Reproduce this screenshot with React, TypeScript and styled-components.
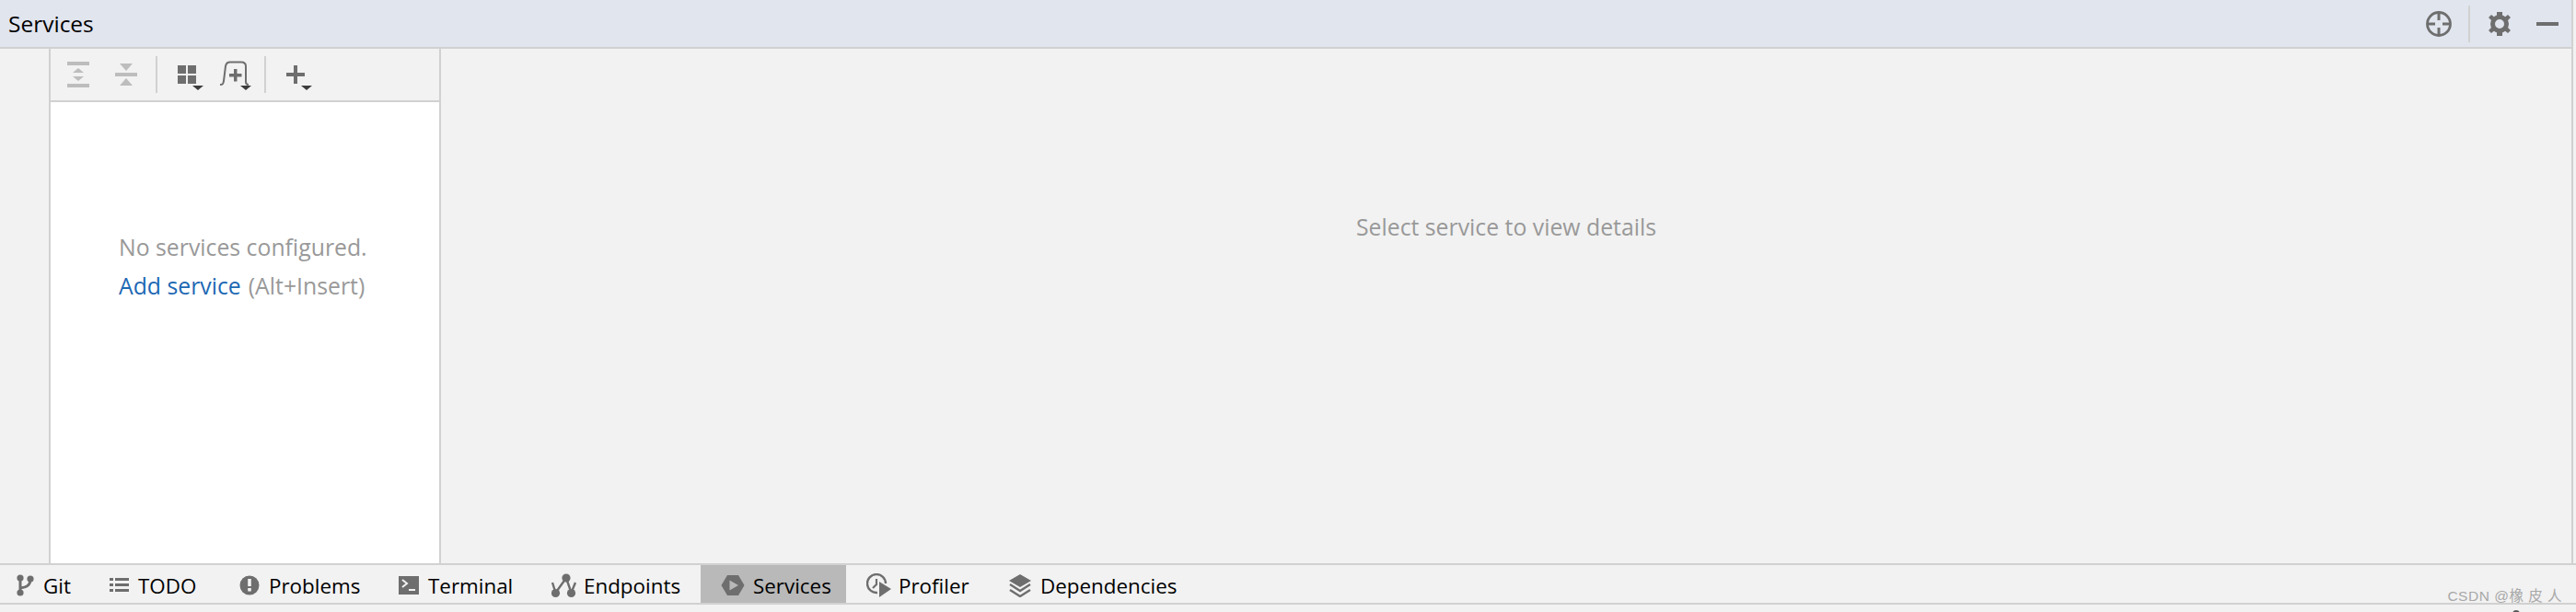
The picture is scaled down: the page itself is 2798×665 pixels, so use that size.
import React from "react";
import styled, { createGlobalStyle } from "styled-components";

const GlobalStyle = createGlobalStyle`
  html, body {
    margin: 0;
    padding: 0;
    background: #f2f2f2;
  }
  body {
    font-family: "Open Sans", "Noto Sans", "Liberation Sans", sans-serif;
  }
`;

const ICON = "#6e6e6e";
const MUTED = "#bdbdbd";
const ARROW = "#3c3c3c";

const IconExpand = () => (
  <svg width="24" height="36" viewBox="0 0 24 36">
    <rect y="4" width="24" height="4" fill={MUTED} />
    <rect y="28" width="24" height="4" fill={MUTED} />
    <path d="M12 11l6 5H6zM12 25l6-5H6z" fill={MUTED} />
  </svg>
);

const IconCollapse = () => (
  <svg width="24" height="36" viewBox="0 0 24 36">
    <rect y="16" width="24" height="4" fill={MUTED} />
    <path d="M5 6h14l-7 8zM5 30h14l-7-8z" fill={MUTED} />
  </svg>
);

const IconGroup = () => (
  <svg width="28" height="36" viewBox="0 0 28 36">
    <path d="M0 8h9v9H0zM11 8h9v9H11zM0 19h9v9H0zM11 19h9v9H11z" fill={ICON} />
    <path d="M16 30h12l-6 5z" fill={ARROW} />
  </svg>
);

const IconNewService = () => (
  <svg width="34" height="36" viewBox="0 0 34 36">
    <path
      d="M0 29c3 0 3.500-1 4-4L6 9c.5-3 2-4.500 5-4.500h12c3 0 5 1.500 5 4.500v17c0 2 1 3 3 3"
      fill="none"
      stroke={ICON}
      strokeWidth="2"
    />
    <path d="M15 12h3.500v5h5v3.500h-5v5H15v-5h-5V17h5z" fill={ICON} />
    <path d="M22 30h12l-6 5z" fill={ARROW} />
  </svg>
);

const IconAdd = () => (
  <svg width="28" height="36" viewBox="0 0 28 36">
    <path d="M8 8h4v8h8v4h-8v8H8v-8H0v-4h8z" fill={ICON} />
    <path d="M16 30h12l-6 5z" fill={ARROW} />
  </svg>
);

const IconTarget = () => (
  <svg width="28" height="28" viewBox="0 0 28 28">
    <circle cx="14" cy="14" r="12.500" fill="none" stroke={ICON} strokeWidth="2.800" />
    <path d="M14 2v8M14 18v8M2 14h8M18 14h8" stroke={ICON} strokeWidth="3" />
  </svg>
);

const IconGear = () => (
  <svg width="24" height="26" viewBox="0 0 24 26">
    <circle cx="12" cy="13" r="7.500" fill="none" stroke={ICON} strokeWidth="5" />
    <path
      d="M9 0h6v5H9zM9 21h6v5H9zM0 6l3-3 5 4-3 4zM24 6l-3-3-5 4 3 4zM0 20l3 3 5-4-3-4zM24 20l-3 3-5-4 3-4z"
      fill={ICON}
    />
  </svg>
);

const IconMinus = () => (
  <svg width="24" height="4" viewBox="0 0 24 4">
    <rect width="24" height="4" fill={ICON} />
  </svg>
);

const IconGit = () => (
  <svg width="20" height="24" viewBox="0 0 20 24">
    <circle cx="5" cy="4" r="3.600" fill={ICON} />
    <circle cx="5" cy="20" r="3.600" fill={ICON} />
    <circle cx="16" cy="5" r="3.600" fill={ICON} />
    <path d="M5 4v16M5 15c6-1 11-2 11-10" fill="none" stroke={ICON} strokeWidth="3" />
  </svg>
);

const IconTodo = () => (
  <svg width="21" height="18" viewBox="0 0 21 18">
    <path
      d="M0 1h4v3H0zM6 1h15v3H6zM0 7h4v3H0zM6 7h15v3H6zM0 13h4v3H0zM6 13h15v3H6z"
      fill={ICON}
    />
  </svg>
);

const IconProblems = () => (
  <svg width="22" height="22" viewBox="0 0 22 22">
    <circle cx="11" cy="11" r="10.500" fill={ICON} />
    <path d="M9.200 4h3.600v8H9.200zM9.200 14h3.600v3.600H9.200z" fill="#f2f2f2" />
  </svg>
);

const IconTerminal = () => (
  <svg width="22" height="20" viewBox="0 0 22 20">
    <rect width="22" height="20" fill={ICON} />
    <path d="M4 4l5 4-5 4" fill="none" stroke="#f2f2f2" strokeWidth="2" />
    <path d="M11 14h7v2h-7z" fill="#f2f2f2" />
  </svg>
);

const IconEndpoints = () => (
  <svg width="27" height="27" viewBox="0 0 27 27">
    <circle cx="16" cy="5" r="4.600" fill={ICON} />
    <circle cx="4.500" cy="21.500" r="4.600" fill={ICON} />
    <circle cx="21.500" cy="21.500" r="4.600" fill={ICON} />
    <path
      d="M1 10l3.500 11L16 5l5.500 16L26 10"
      fill="none"
      stroke={ICON}
      strokeWidth="2.400"
    />
  </svg>
);

const IconServices = () => (
  <svg width="26" height="24" viewBox="0 0 26 24">
    <path d="M7 1h12l6.500 11L19 23H7L.5 12z" fill={ICON} />
    <path d="M9.500 6.500L19 12l-9.500 5.500z" fill="#b9b9b9" />
  </svg>
);

const IconProfiler = () => (
  <svg width="28" height="26" viewBox="0 0 28 26">
    <path d="M12 21A10 10 0 1 1 21 11" fill="none" stroke={ICON} strokeWidth="2.400" />
    <path d="M11 6v6l-4 4" fill="none" stroke={ICON} strokeWidth="2.200" />
    <path d="M14 9l13 8-13 9z" fill={ICON} />
  </svg>
);

const IconDependencies = () => (
  <svg width="24" height="25" viewBox="0 0 24 25">
    <path d="M12 0l12 7-12 7L0 7z" fill={ICON} />
    <path d="M1 11l11 7 11-7M1 17l11 7 11-7" fill="none" stroke={ICON} strokeWidth="2.400" />
  </svg>
);

const tabs = [
  { label: "Git", icon: <IconGit />, width: 97, iconBox: 30, left: 17 },
  { label: "TODO", icon: <IconTodo />, width: 141, iconBox: 31, left: 22 },
  { label: "Problems", icon: <IconProblems />, width: 173, iconBox: 32, left: 22 },
  { label: "Terminal", icon: <IconTerminal />, width: 166, iconBox: 32, left: 22 },
  { label: "Endpoints", icon: <IconEndpoints />, width: 184, iconBox: 35, left: 22 },
  { label: "Services", icon: <IconServices />, width: 158, iconBox: 35, left: 22, active: true },
  { label: "Profiler", icon: <IconProfiler />, width: 155, iconBox: 35, left: 22 },
  { label: "Dependencies", icon: <IconDependencies />, width: 204, iconBox: 34, left: 22 },
];

const Page = styled.div`
  position: relative;
  width: 2798px;
  height: 665px;
  overflow: hidden;
  display: flex;
  flex-direction: column;
  background: #f2f2f2;
`;

const Frame = styled.div`
  width: 2795px;
  height: 612px;
  flex: none;
  box-sizing: border-box;
  border-right: 2px solid #d1d1d1;
  display: flex;
  flex-direction: column;
`;

const TitleBar = styled.header`
  height: 53px;
  flex: none;
  box-sizing: border-box;
  border-bottom: 2px solid #d1d1d1;
  background: #e1e5ee;
  display: flex;
  align-items: center;
  padding: 0 14px 0 9px;
`;

const Title = styled.h1`
  margin: 0;
  font-size: 24.500px;
  font-weight: 400;
  color: #000;
`;

const TitleActions = styled.div`
  margin-left: auto;
  display: flex;
  align-items: center;
`;

const TitleSeparator = styled.span`
  width: 2px;
  height: 40px;
  background: #d1d1d1;
  margin: 0 20px 0 18px;
`;

const MinusButton = styled.span`
  display: flex;
  margin-left: 28px;
`;

const Body = styled.div`
  flex: 1;
  display: flex;
  min-height: 0;
`;

const Rail = styled.aside`
  width: 55px;
  flex: none;
  box-sizing: border-box;
  border-right: 2px solid #d1d1d1;
`;

const ListPane = styled.section`
  width: 424px;
  flex: none;
  box-sizing: border-box;
  border-right: 2px solid #d1d1d1;
  display: flex;
  flex-direction: column;
`;

const Toolbar = styled.div`
  height: 58px;
  flex: none;
  box-sizing: border-box;
  border-bottom: 2px solid #d1d1d1;
  display: flex;
  align-items: center;
  padding-left: 18px;
`;

const ToolGroup = styled.div<{ $gap: number; $end: number }>`
  display: flex;
  gap: ${(p) => p.$gap}px;
  margin-right: ${(p) => p.$end}px;
`;

const ToolButton = styled.span`
  display: flex;
`;

const ToolSeparator = styled.span`
  width: 2px;
  height: 40px;
  background: #d1d1d1;
  margin-right: 22px;
`;

const EmptyList = styled.div`
  flex: 1;
  background: #fff;
  padding: 136px 0 0 74px;
  font-size: 24.800px;
  line-height: 42px;
  color: #999;
  white-space: nowrap;
`;

const LinkText = styled.a`
  color: #1d68b4;
  margin-right: 8px;
`;

const DetailPane = styled.section`
  flex: 1;
  display: flex;
  justify-content: center;
  font-size: 24.800px;
  line-height: 32px;
  color: #999;
`;

const DetailText = styled.p`
  margin: 177px 0 0;
`;

const TabBar = styled.nav`
  height: 45px;
  flex: none;
  box-sizing: border-box;
  border-top: 2px solid #d1d1d1;
  border-bottom: 2px solid #d1d1d1;
  display: flex;
  align-items: stretch;
`;

const Tab = styled.div<{ $width: number; $left: number; $active?: boolean }>`
  width: ${(p) => p.$width}px;
  flex: none;
  box-sizing: border-box;
  padding: 3px 0 0 ${(p) => p.$left}px;
  display: flex;
  align-items: center;
  background: ${(p) => (p.$active ? "#b9b9b9" : "transparent")};
  font-size: 22.400px;
  color: #000;
`;

const TabIcon = styled.span<{ $box: number }>`
  width: ${(p) => p.$box}px;
  flex: none;
  display: flex;
  align-items: center;
`;

const Watermark = styled.span`
  position: absolute;
  right: 15px;
  top: 638px;
  font-family: "Liberation Sans", "Noto Sans CJK SC", sans-serif;
  font-size: 15.500px;
  line-height: 20px;
  color: #a8a8a8;
  letter-spacing: 0.5px;
`;

const CursorDot = styled.span`
  position: absolute;
  left: 2729px;
  top: 663px;
  width: 8px;
  height: 8px;
  border-radius: 50%;
  background: #555;
`;

export default function App() {
  return (
    <>
      <GlobalStyle />
      <Page>
        <Frame>
          <TitleBar>
            <Title>Services</Title>
            <TitleActions>
              <IconTarget />
              <TitleSeparator />
              <IconGear />
              <MinusButton>
                <IconMinus />
              </MinusButton>
            </TitleActions>
          </TitleBar>
          <Body>
            <Rail />
            <ListPane>
              <Toolbar>
                <ToolGroup $gap={28} $end={20}>
                  <ToolButton>
                    <IconExpand />
                  </ToolButton>
                  <ToolButton>
                    <IconCollapse />
                  </ToolButton>
                </ToolGroup>
                <ToolSeparator />
                <ToolGroup $gap={18} $end={14}>
                  <ToolButton>
                    <IconGroup />
                  </ToolButton>
                  <ToolButton>
                    <IconNewService />
                  </ToolButton>
                </ToolGroup>
                <ToolSeparator />
                <ToolGroup $gap={0} $end={0}>
                  <ToolButton>
                    <IconAdd />
                  </ToolButton>
                </ToolGroup>
              </Toolbar>
              <EmptyList>
                <div>No services configured.</div>
                <div>
                  <LinkText>Add service</LinkText>
                  (Alt+Insert)
                </div>
              </EmptyList>
            </ListPane>
            <DetailPane>
              <DetailText>Select service to view details</DetailText>
            </DetailPane>
          </Body>
        </Frame>
        <TabBar>
          {tabs.map((tab) => (
            <Tab key={tab.label} $width={tab.width} $left={tab.left} $active={tab.active}>
              <TabIcon $box={tab.iconBox}>{tab.icon}</TabIcon>
              {tab.label}
            </Tab>
          ))}
        </TabBar>
        <Watermark>CSDN @橡 皮 人</Watermark>
        <CursorDot />
      </Page>
    </>
  );
}
